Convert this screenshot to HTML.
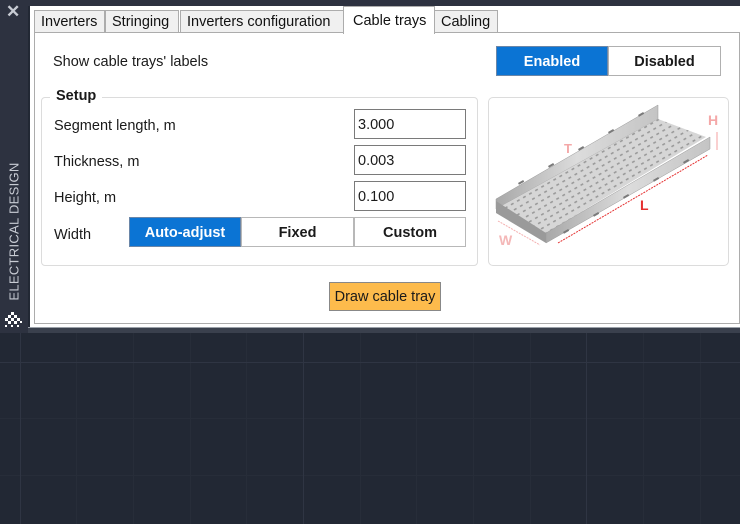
<!DOCTYPE html>
<html><head><meta charset="utf-8"><style>
*{box-sizing:border-box;margin:0;padding:0}
body{width:740px;height:524px;overflow:hidden;background:#222834;font-family:"Segoe UI","Liberation Sans",sans-serif;font-size:14px;color:#1a1a1a;position:relative}
.grid{position:absolute;left:0;top:0;width:740px;height:524px}
.side{position:absolute;left:0;top:0;width:28px;height:333px;background:#2d3240}
.top{position:absolute;left:28px;top:0;width:712px;height:6px;background:#2d3240}
.strip{position:absolute;left:28px;top:327px;width:712px;height:6px;background:#3a404d;border-top:1px solid #9aa0a8}
.panel{position:absolute;left:30px;top:6px;width:710px;height:321px;background:#fff}
.tab{position:absolute;top:10px;height:23px;background:#f0f0f0;border:1px solid #acacac;font-size:14.5px;line-height:23px;padding-left:6px;color:#111}
.tab.sel{background:#fff;top:6px;height:28px;border-bottom:none;line-height:29px;padding-left:9px}
.body{position:absolute;left:34px;top:32px;width:706px;height:292px;border:1px solid #acacac}
.abs{position:absolute}
.btn{position:absolute;border:1px solid #adadad;background:#fff;text-align:center;font-weight:bold;font-size:14.5px}
.btn.on{background:#0b74d4;color:#fff;border-color:#6a86a8}
.inp{position:absolute;left:354px;width:112px;height:30px;border:1px solid #7a7a7a;padding-left:3px;line-height:31px;font-size:14.5px}
.lbl{position:absolute;left:54px;font-size:14.5px}
</style></head><body>
<svg class="grid" width="740" height="524">
<g stroke="#272d39" stroke-width="1">
<line x1="76.5" y1="333" x2="76.5" y2="524"/><line x1="133.5" y1="333" x2="133.5" y2="524"/><line x1="190.5" y1="333" x2="190.5" y2="524"/><line x1="246.5" y1="333" x2="246.5" y2="524"/>
<line x1="360.5" y1="333" x2="360.5" y2="524"/><line x1="416.5" y1="333" x2="416.5" y2="524"/><line x1="473.5" y1="333" x2="473.5" y2="524"/><line x1="530.5" y1="333" x2="530.5" y2="524"/>
<line x1="643.5" y1="333" x2="643.5" y2="524"/><line x1="700.5" y1="333" x2="700.5" y2="524"/>
<line x1="0" y1="418.5" x2="740" y2="418.5"/><line x1="0" y1="475.5" x2="740" y2="475.5"/>
</g>
<g stroke="#2f3543" stroke-width="1">
<line x1="20.5" y1="333" x2="20.5" y2="524"/><line x1="303.5" y1="333" x2="303.5" y2="524"/><line x1="586.5" y1="333" x2="586.5" y2="524"/>
<line x1="0" y1="362.5" x2="740" y2="362.5"/>
</g>
</svg>
<div class="side"></div><div class="top"></div><div class="strip"></div>
<div class="abs" style="left:6px;top:2px;color:#c8ccd4;font-size:17px;font-weight:bold">✕</div>
<div class="abs" style="left:-56px;top:224px;width:140px;transform:rotate(-90deg);color:#c8ccd4;font-size:13px;letter-spacing:0.3px;text-align:center;white-space:nowrap">ELECTRICAL DESIGN</div>
<svg class="abs" style="left:3px;top:311px" width="22" height="22"><g fill="#fff">
<rect x="8" y="1" width="3" height="3"/><rect x="5" y="4" width="3" height="3"/><rect x="11" y="4" width="3" height="3"/><rect x="2" y="7" width="3" height="3"/><rect x="8" y="7" width="3" height="3"/><rect x="14" y="7" width="3" height="3"/><rect x="5" y="10" width="3" height="3"/><rect x="11" y="10" width="3" height="3"/><rect x="2" y="14" width="2" height="2"/><rect x="8" y="14" width="2" height="2"/><rect x="14" y="14" width="2" height="2"/><rect x="17" y="10" width="2" height="2"/></g></svg>
<div class="panel"></div>
<div class="body"></div>
<div class="tab" style="left:34px;width:71px">Inverters</div>
<div class="tab" style="left:105px;width:74px">Stringing</div>
<div class="tab" style="left:180px;width:164px">Inverters configuration</div>
<div class="tab sel" style="left:343px;width:92px">Cable trays</div>
<div class="tab" style="left:434px;width:64px">Cabling</div>
<div class="lbl" style="left:53px;top:54px">Show cable trays' labels</div>
<div class="btn on" style="left:496px;top:46px;width:112px;height:30px;line-height:30px">Enabled</div>
<div class="btn" style="left:608px;top:46px;width:113px;height:30px;line-height:30px;border-color:#b0b0b0">Disabled</div>
<div class="abs" style="left:41px;top:97px;width:437px;height:169px;border:1px solid #dcdcdc;border-radius:4px"></div>
<div class="abs" style="left:50px;top:88px;background:#fff;padding:0 6px;font-weight:bold;font-size:14.5px">Setup</div>
<div class="lbl" style="top:118px">Segment length, m</div>
<div class="lbl" style="top:154px">Thickness, m</div>
<div class="lbl" style="top:190px">Height, m</div>
<div class="lbl" style="top:227px">Width</div>
<div class="inp" style="top:109px">3.000</div>
<div class="inp" style="top:145px">0.003</div>
<div class="inp" style="top:181px">0.100</div>
<div class="btn on" style="left:129px;top:217px;width:112px;height:30px;line-height:31px">Auto-adjust</div>
<div class="btn" style="left:241px;top:217px;width:113px;height:30px;line-height:31px;border-color:#b8b8b8">Fixed</div>
<div class="btn" style="left:354px;top:217px;width:112px;height:30px;line-height:31px;border-color:#b8b8b8">Custom</div>
<div class="abs" style="left:329px;top:282px;width:112px;height:29px;background:#fdbb4c;border:1px solid #888;text-align:center;line-height:29px;font-size:14.5px">Draw cable tray</div>
<div class="abs" style="left:488px;top:97px;width:241px;height:169px;border:1px solid #dcdcdc;border-radius:5px"></div>
<svg class="abs" style="left:488px;top:97px" width="241" height="169">
<defs>
<linearGradient id="g" x1="0" y1="0" x2="1" y2="0"><stop offset="0" stop-color="#a8a8a8"/><stop offset=".5" stop-color="#dcdcdc"/><stop offset="1" stop-color="#c4c4c4"/></linearGradient>
<pattern id="p" width="7" height="6" patternUnits="userSpaceOnUse" patternTransform="rotate(-30)"><rect width="7" height="6" fill="#d6d6d6"/><rect x="1" y="2" width="3" height="1.6" fill="#9a9a9a"/></pattern>
</defs>
<polygon points="8,102 170,8 170,22 8,112" fill="url(#g)" stroke="#999" stroke-width=".5"/>
<polygon points="8,112 170,22 218,40 58,136" fill="url(#p)"/>
<polygon points="8,104 8,116 58,146 58,136" fill="#9a9a9a"/>
<polygon points="58,136 222,40 222,52 58,146" fill="url(#g)" stroke="#999" stroke-width=".5"/>
<g fill="#7a7a7a"><rect x="30" y="86" width="6" height="2" transform="rotate(-30 30 86)"/><rect x="60" y="69" width="6" height="2" transform="rotate(-30 60 69)"/><rect x="90" y="52" width="6" height="2" transform="rotate(-30 90 52)"/><rect x="120" y="35" width="6" height="2" transform="rotate(-30 120 35)"/><rect x="150" y="18" width="6" height="2" transform="rotate(-30 150 18)"/>
<rect x="75" y="135" width="6" height="2" transform="rotate(-30 75 135)"/><rect x="105" y="118" width="6" height="2" transform="rotate(-30 105 118)"/><rect x="135" y="100" width="6" height="2" transform="rotate(-30 135 100)"/><rect x="165" y="83" width="6" height="2" transform="rotate(-30 165 83)"/><rect x="195" y="65" width="6" height="2" transform="rotate(-30 195 65)"/></g>
<line x1="70" y1="146" x2="220" y2="58" stroke="#e53030" stroke-width="1" stroke-dasharray="2 1"/>
<line x1="10" y1="124" x2="52" y2="148" stroke="#f4b0b0" stroke-width="1" stroke-dasharray="2 1"/>
<line x1="229" y1="35" x2="229" y2="53" stroke="#f4a0a0" stroke-width="1"/>
<text x="152" y="113" fill="#e53030" font-family="Liberation Sans" font-weight="bold" font-size="14">L</text>
<text x="220" y="28" fill="#f4a8a8" font-family="Liberation Sans" font-weight="bold" font-size="14">H</text>
<text x="11" y="148" fill="#f4b8b8" font-family="Liberation Sans" font-weight="bold" font-size="14">W</text>
<text x="76" y="56" fill="#f4a8a8" font-family="Liberation Sans" font-weight="bold" font-size="13">T</text>
</svg>
</body></html>
